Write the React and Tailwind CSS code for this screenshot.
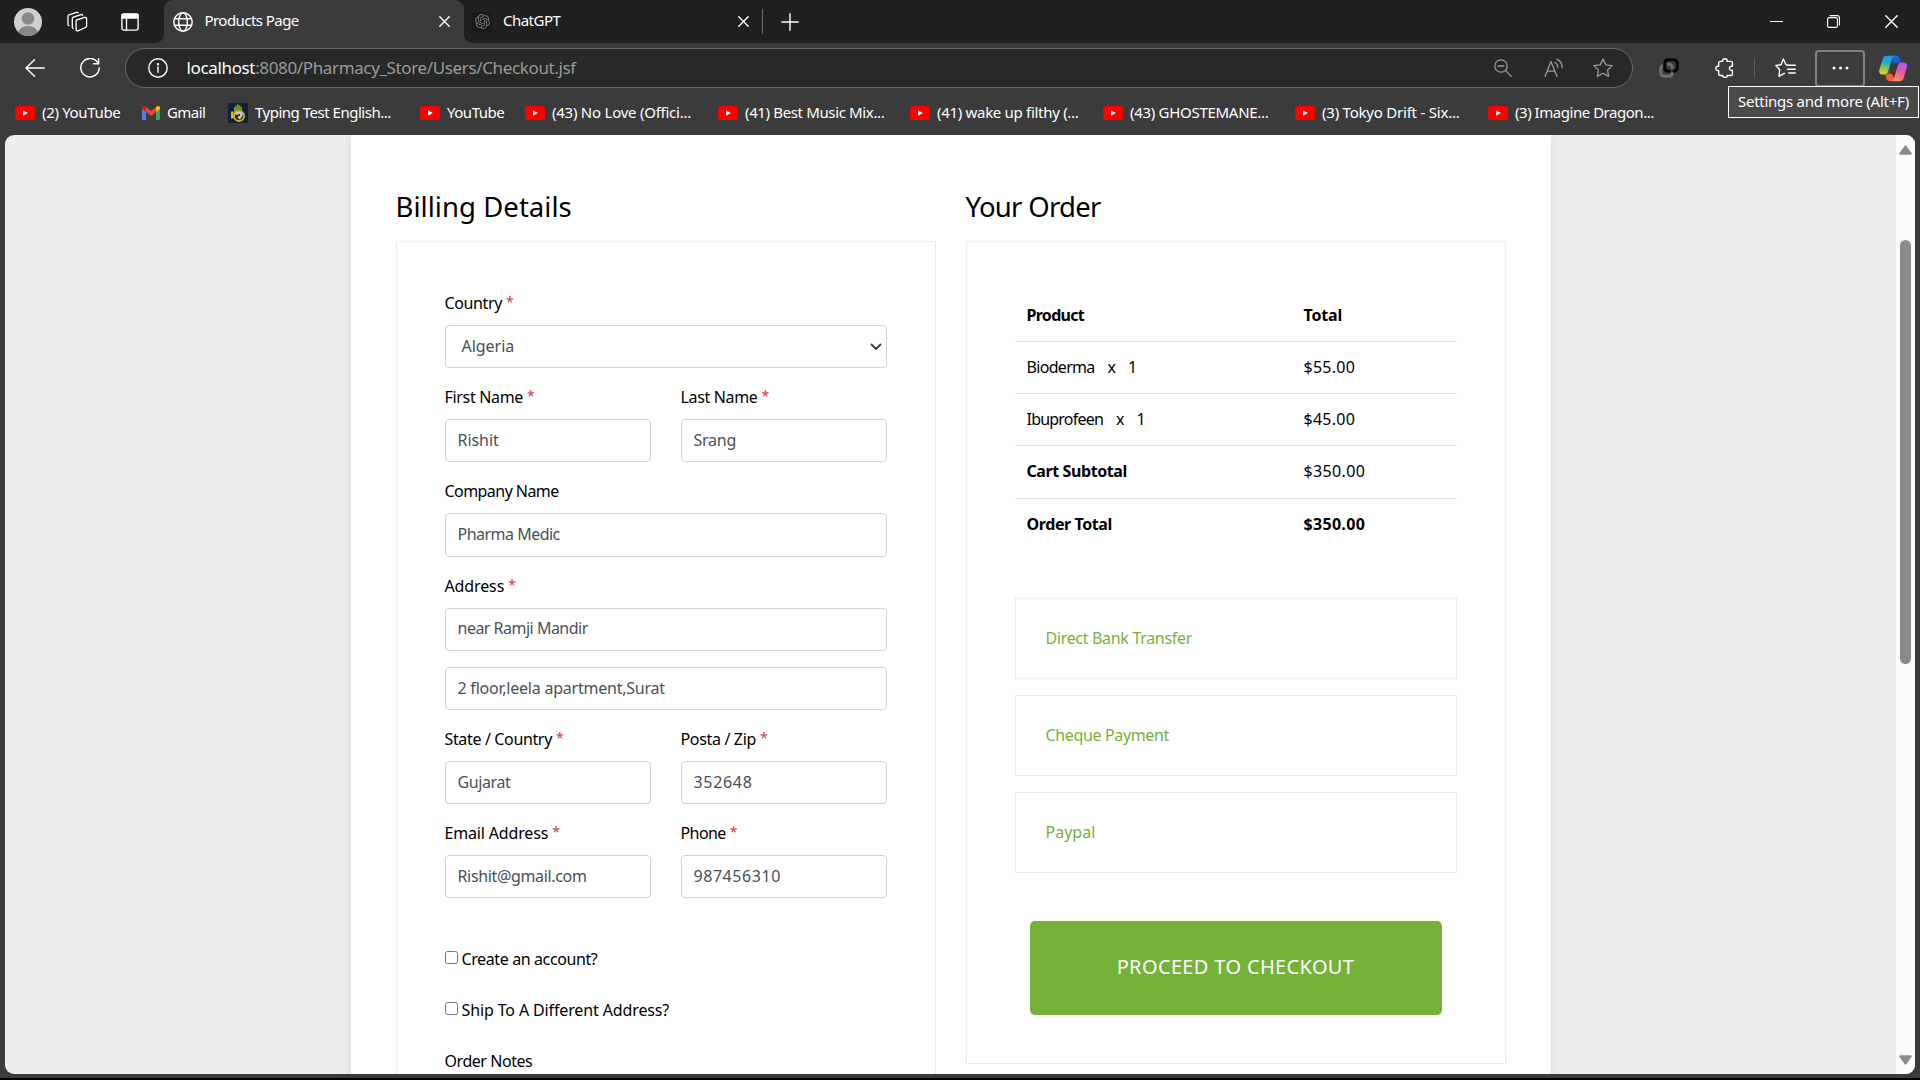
import React, { useLayoutEffect, useRef, useState } from "react";

/* Text whose tracking is adjusted so the line spans a given ink width. */
function Fit({ w, className = "", children }) {
  const ref = useRef(null);
  const [spacing, setSpacing] = useState(0);
  useLayoutEffect(() => {
    const natural = ref.current.getBoundingClientRect().width;
    const count = String(children).length;
    if (count > 1) setSpacing((w + 0.8 - natural) / (count - 1));
  }, []);
  return (
    <span ref={ref} className={"inline-block whitespace-pre " + className} style={{ letterSpacing: spacing + "px" }}>
      {children}
    </span>
  );
}

const Svg = ({ w, h, className = "", children, sw = 1.3, stroke = "currentColor" }) => (
  <svg width={w} height={h} viewBox={`0 0 ${w} ${h}`} fill="none" stroke={stroke} strokeWidth={sw} strokeLinecap="round" strokeLinejoin="round" className={"shrink-0 " + className}>
    {children}
  </svg>
);

const Cross = ({ size = 11, className }) => (
  <Svg w={size} h={size} className={className} sw={1.4}>
    <path d={`M.8 .8 ${size - 0.8} ${size - 0.8}M${size - 0.8} .8 .8 ${size - 0.8}`} />
  </Svg>
);

const Avatar = () => (
  <svg width="28" height="28" viewBox="0 0 28 28" className="shrink-0">
    <clipPath id="avatar"><circle cx="14" cy="14" r="14" /></clipPath>
    <g clipPath="url(#avatar)">
      <rect width="28" height="28" fill="#d2d0ce" />
      <circle cx="14" cy="10.5" r="6.2" fill="#8a8886" />
      <ellipse cx="14" cy="25.5" rx="10" ry="7.5" fill="#8a8886" />
    </g>
  </svg>
);

const Workspaces = ({ className }) => (
  <Svg w={22} h={22} className={className} sw={1.3}>
    <path d="M10.3 9.1 18.6 6.4c1.2-.4 2 .3 2 1.3v7.2c0 .7-.4 1.3-1.1 1.6l-7.6 3.3c-1 .4-1.8-.1-1.8-1.1v-8.4c0-.6.1-1 .2-1.2Z" />
    <path d="M16.7 4.2c-.3-.6-.9-.8-1.6-.6L7.3 6.2c-.7.3-1 .8-1 1.5v8.600c0 .6.4 1 .9 1.2" />
    <path d="M12.200 1.900c-.3-.6-.9-.7-1.600-.5L3 3.900c-.7.3-1 .8-1 1.500v8c0 .7.3 1.100.9 1.200" />
  </Svg>
);

const VerticalTabs = ({ className }) => (
  <Svg w={18} h={18} className={className} sw={1.4}>
    <rect x=".9" y=".9" width="16.2" height="16.2" rx="2" />
    <path d="M1 1.500h16v3.500H1z" fill="currentColor" />
    <path d="M5.500 5v12" />
  </Svg>
);

const Globe = () => (
  <Svg w={20} h={20} sw={1.4}>
    <circle cx="10" cy="10" r="9.2" />
    <ellipse cx="10" cy="10" rx="4.3" ry="9.2" />
    <path d="M1.500 6.800h17M1.500 13.200h17" />
  </Svg>
);

const ChatLogo = () => (
  <span className="flex size-5 shrink-0 items-center justify-center rounded-[3px] bg-[#181818]">
    <svg width="15" height="15" viewBox="0 0 24 24" fill="#777">
      <path d="M22.282 9.821a5.985 5.985 0 0 0-.516-4.910 6.046 6.046 0 0 0-6.510-2.900A6.065 6.065 0 0 0 4.981 4.180a5.985 5.985 0 0 0-3.998 2.900 6.046 6.046 0 0 0 .743 7.097 5.980 5.980 0 0 0 .510 4.911 6.051 6.051 0 0 0 6.515 2.900A5.985 5.985 0 0 0 13.260 24a6.056 6.056 0 0 0 5.772-4.206 5.990 5.990 0 0 0 3.998-2.900 6.056 6.056 0 0 0-.748-7.073zM13.260 22.430a4.476 4.476 0 0 1-2.876-1.040l.141-.081 4.779-2.758a.795.795 0 0 0 .392-.681v-6.737l2.020 1.168a.071.071 0 0 1 .038.052v5.583a4.504 4.504 0 0 1-4.494 4.494zM3.600 18.304a4.470 4.470 0 0 1-.535-3.014l.142.085 4.783 2.759a.771.771 0 0 0 .780 0l5.843-3.369v2.332a.080.080 0 0 1-.033.062L9.740 19.950a4.500 4.500 0 0 1-6.140-1.646zM2.340 7.896a4.485 4.485 0 0 1 2.366-1.973V11.600a.766.766 0 0 0 .388.676l5.815 3.355-2.020 1.168a.076.076 0 0 1-.071 0l-4.830-2.786A4.504 4.504 0 0 1 2.340 7.872zm16.597 3.855l-5.833-3.387L15.119 7.200a.076.076 0 0 1 .071 0l4.830 2.791a4.494 4.494 0 0 1-.676 8.105v-5.678a.790.790 0 0 0-.407-.667zm2.010-3.023l-.141-.085-4.774-2.782a.776.776 0 0 0-.785 0L9.409 9.230V6.897a.066.066 0 0 1 .028-.061l4.830-2.787a4.500 4.500 0 0 1 6.680 4.660zm-12.640 4.135l-2.020-1.164a.080.080 0 0 1-.038-.057V6.075a4.500 4.500 0 0 1 7.375-3.453l-.142.080L8.704 5.460a.795.795 0 0 0-.393.681zm1.097-2.365l2.602-1.500 2.607 1.500v2.999l-2.597 1.500-2.607-1.500z" />
    </svg>
  </span>
);

const YouTube = () => (
  <svg width="20" height="14" viewBox="0 0 20 14" className="shrink-0">
    <rect width="20" height="14" rx="3.5" fill="#f00" />
    <path d="M8 4.200v5.600L12.800 7z" fill="#fff" />
  </svg>
);

const Gmail = () => (
  <svg width="18" height="14" viewBox="0 0 18 14" className="shrink-0">
    <path d="M0 2.500 4 5.500V14H1.300A1.300 1.300 0 0 1 0 12.700z" fill="#4285f4" />
    <path d="M18 2.500 14 5.500V14h2.700a1.300 1.300 0 0 0 1.300-1.300z" fill="#34a853" />
    <path d="M14 1v5l4-2.900V2c0-1.900-1.900-2.500-3-1.700z" fill="#fbbc04" />
    <path d="M0 2C0 .1 1.900-.5 3 .3L4 1v5L0 3.100z" fill="#c5221f" />
    <path d="M4 1l5 3.800L14 1v5L9 9.800 4 6z" fill="#ea4335" />
  </svg>
);

const Typing = () => (
  <svg width="20" height="20" viewBox="0 0 20 20" className="shrink-0">
    <rect width="20" height="20" fill="#0c2433" />
    <path d="M6 9V4.500l1.500-.5V2.500H9V1.500h1.700v1h1.800v1.500H14V10H6z" fill="#7ea53a" />
    <path d="M8.300 3v5M10.600 2.500V8M12.700 4v4" stroke="#3b5b27" strokeWidth=".6" />
    <path d="M3 8.500h2.500v7H3z" fill="#f1b51c" />
    <circle cx="11" cy="13" r="5" fill="none" stroke="#e0a51f" strokeWidth="2" />
    <path d="M6.500 11c2-3 7-3 8.500-.5l-1 3-2 3-2.500-1.500 1-2.500z" fill="#c9cdd0" />
    <circle cx="11" cy="12" r="1.2" fill="#2a4452" />
  </svg>
);

const Copilot = ({ className }) => (
  <svg width="28" height="27" viewBox="0 0 28 27" className={"shrink-0 " + className}>
    <defs>
      <linearGradient id="cpa" x1=".5" y1="0" x2=".3" y2="1">
        <stop offset="0" stopColor="#1b9df0" /><stop offset=".4" stopColor="#1fb0c4" /><stop offset=".7" stopColor="#8cc84b" /><stop offset="1" stopColor="#f7d417" />
      </linearGradient>
      <linearGradient id="cpb" x1=".7" y1="0" x2=".3" y2="1">
        <stop offset="0" stopColor="#a855f5" /><stop offset=".5" stopColor="#ee5a9b" /><stop offset="1" stopColor="#fb9055" />
      </linearGradient>
      <linearGradient id="cpc" x1="0" y1="0" x2="1" y2="1">
        <stop offset="0" stopColor="#1478dd" /><stop offset="1" stopColor="#1b49c8" />
      </linearGradient>
    </defs>
    <path d="M12 .8h5.500c1.600 0 2.500.9 3 2.400l1.400 4.500h-3c-2 0-3.200.5-4 2.300L13 4z" fill="url(#cpc)" />
    <path d="M6.200 19.500c2 0 3.200-.5 4-2.300l1.200-3 3.600 9.300c-.5 1.500-1.300 2.700-3 2.700h-1.500c-1.700 0-2.500-.9-3-2.400z" fill="#f4603c" />
    <path d="M8 .8h7.500c-1.400.4-2 1.600-2.500 3.200L9.300 16c-.6 2.200-1.400 3.500-3.500 3.500H3.300C.6 19.500-.2 17.300.4 14.800L3.700 4C4.400 1.900 5.600.8 8 .8z" fill="url(#cpa)" />
    <path d="M20.300 26.200h-7.800c1.400-.4 2-1.600 2.500-3.200L18.700 11c.6-2.200 1.400-3.500 3.500-3.500H25c2.700 0 3.500 2.200 2.900 4.700L24.600 23c-.7 2.100-1.900 3.200-4.300 3.200z" fill="url(#cpb)" />
    <path d="m13.300 8.500h3.300l-2.300 8.800-1.300 1.700h-2.700z" fill="#3b3b3b" />
  </svg>
);

function TabBar() {
  return (
    <div className="flex h-[43px] shrink-0 items-center bg-[#202020] pl-[14px]">
      <Avatar />
      <Workspaces className="ml-[24px]" />
      <VerticalTabs className="ml-[33px]" />
      <div className="relative ml-[25px] flex h-full w-[300px] items-center rounded-t-[9px] bg-[#3b3b3b] pr-[14px] pl-[9px]">
        <span className="absolute bottom-0 -left-[9px] size-[9px] bg-[radial-gradient(circle_at_0_0,#202020_8.5px,#3b3b3b_9.5px)]" />
        <span className="absolute -right-[9px] bottom-0 size-[9px] bg-[radial-gradient(circle_at_100%_0,#202020_8.5px,#3b3b3b_9.5px)]" />
        <Globe />
        <Fit w={94} className="mb-[2px] ml-[11.5px] text-[15px]">Products Page</Fit>
        <Cross className="ml-auto" />
      </div>
      <div className="flex h-full w-[298px] items-center pr-[13px] pl-[8px]">
        <ChatLogo />
        <Fit w={57} className="mb-[2px] ml-[11px] text-[15px]">ChatGPT</Fit>
        <Cross className="ml-auto" />
      </div>
      <span className="h-[25px] w-px bg-[#6b6b6b]" />
      <Svg w={18} h={18} className="ml-[17.5px]" sw={1.4}><path d="M9 .8v16.400M.8 9h16.400" /></Svg>
      <Svg w={13} h={13} className="ml-auto" sw={1}><path d="M0 6.500h13" /></Svg>
      <Svg w={13} h={13} className="ml-[44px]" sw={1.1}>
        <rect x=".6" y="2.6" width="9.8" height="9.8" rx="1.5" />
        <path d="M3 .6h7.400a2 2 0 0 1 2 2V10" />
      </Svg>
      <Cross size={13} className="mr-[22px] ml-[45px]" />
    </div>
  );
}

function Toolbar() {
  return (
    <div className="flex h-[50px] shrink-0 items-center pl-[25px]">
      <Svg w={20} h={18} className="mb-[1px]" sw={1.5}><path d="M19.200 9H1M9.500 .8 1 9l8.500 8.200" /></Svg>
      <Svg w={20} h={20} className="ml-[35px]" sw={1.5}>
        <path d="M18.200 5.500A9.200 9.200 0 1 0 19.200 10" />
        <path d="M18.600 .8v5h-5" />
      </Svg>
      <div className="ml-[25px] flex h-[40px] w-[1508px] items-center rounded-full border border-[#6b6b6b] bg-[#282828] pl-[21.5px]">
        <Svg w={20} h={20} sw={1.4}>
          <circle cx="10" cy="10" r="9.2" />
          <path d="M10 9v5.200" /><circle cx="10" cy="6.2" r=".5" fill="currentColor" />
        </Svg>
        <div className="mb-[1px] ml-[19px] flex text-[17px]">
          <Fit w={68.2}>localhost</Fit>
          <Fit w={320.2} className="text-[#9a9a9a]">:8080/Pharmacy_Store/Users/Checkout.jsf</Fit>
        </div>
        <div className="mr-[19.5px] ml-auto flex items-center text-[#9a9a9a]">
          <Svg w={18} h={18} sw={1.3}><circle cx="7" cy="7" r="6.2" /><path d="m11.600 11.600 5.600 5.600M4.200 7h5.600" /></Svg>
          <Svg w={20} h={20} className="ml-[32px]" sw={1.3}>
            <path d="M1 18.500 7 3.500l6 15M3.200 13.200h7.700" />
            <path d="M11 4.500c1.800 1 2.800 2.800 2.800 5M12.800 1.200c3.200 1.500 5.400 4.500 5.400 8.500" />
          </Svg>
          <Svg w={20} h={20} className="ml-[29px]" sw={1.3}>
            <path d="m10 1 2.800 5.900 6.300.8-4.600 4.400 1.200 6.300L10 15.300l-5.700 3.100 1.200-6.300L.9 7.700l6.300-.8z" />
          </Svg>
        </div>
      </div>
      <Svg w={20} h={20} className="ml-[26px]" sw={3}>
        <path d="M5 7.200C3 7.500 1.700 8.800 1.700 11v3.300c0 2.500 1.500 4 4 4h3.600c2.300 0 3.800-1.200 4-3.300" stroke="#6e6e70" />
        <path d="M9.500 6.300c2.300.1 3.500 1.200 3.700 3.400" stroke="#6e6e70" sw={2} />
        <path d="M10.500 13.300H9.700c-2.500 0-4-1.500-4-4V5.700c0-2.500 1.500-4 4-4h4.600c2.500 0 4 1.500 4 4v3.600c0 2.300-1.200 3.700-3.300 4" stroke="#050505" />
      </Svg>
      <Svg w={20} h={20} className="ml-[36px]" sw={1.4}>
        <path d="M5.300 3.400h2.300C7.300 1.800 8.300.8 9.900.8s2.600 1 2.300 2.600h3.600c1 0 1.600.6 1.600 1.600v3.400c-1.800-.3-3 .3-3 1.900s1.200 2.300 3 2v3.600c0 1-.6 1.600-1.600 1.600h-3.500c.1 1.100-.8 1.900-2.300 1.900s-2.400-.8-2.300-1.900H5.300c-1 0-1.600-.6-1.600-1.600v-3.400c-1.900.3-2.900-.7-2.900-2.200s1-2.400 2.900-2.100V5c0-1 .6-1.600 1.600-1.600Z" />
      </Svg>
      <span className="ml-[19px] h-[20px] w-px bg-[#5c5c5c]" />
      <Svg w={21} h={20} className="ml-[20px]" sw={1.4}>
        <path d="M13.500 7.200 11 6.700 8.300 1 6 6.700.9 7.500 4.700 11.800 3.900 18.300 9.300 15.300" />
        <path d="M14 7.300h6.300M12.500 11.200h7.800M13.800 15h6.500" />
      </Svg>
      <div className="ml-[19px] flex h-[37px] w-[50px] items-center justify-center rounded-[4px] border-2 border-[#7b828b]">
        <Svg w={17} h={4} stroke="none"><circle cx="2" cy="2" r="1.5" fill="#fff" /><circle cx="8.5" cy="2" r="1.5" fill="#fff" /><circle cx="15" cy="2" r="1.5" fill="#fff" /></Svg>
      </div>
      <Copilot className="ml-[14px]" />
    </div>
  );
}

const BOOKMARKS = [
  { icon: YouTube, label: "(2) YouTube", w: 78, slot: "w-[127px]" },
  { icon: Gmail, label: "Gmail", w: 38, slot: "w-[86px]" },
  { icon: Typing, label: "Typing Test English...", w: 135.5, slot: "w-[192px]" },
  { icon: YouTube, label: "YouTube", w: 57, slot: "w-[105px]" },
  { icon: YouTube, label: "(43) No Love (Offici...", w: 138.5, slot: "w-[193px]" },
  { icon: YouTube, label: "(41) Best Music Mix...", w: 139, slot: "w-[192px]" },
  { icon: YouTube, label: "(41) wake up filthy (...", w: 141, slot: "w-[193px]" },
  { icon: YouTube, label: "(43) GHOSTEMANE...", w: 138, slot: "w-[192px]" },
  { icon: YouTube, label: "(3) Tokyo Drift - Six...", w: 137, slot: "w-[193px]" },
  { icon: YouTube, label: "(3) Imagine Dragon...", w: 138.5, slot: "w-[193px]" },
];

function Bookmarks() {
  return (
    <div className="flex h-[42px] shrink-0 items-center pb-[2px] pl-[15px]">
      {BOOKMARKS.map(({ icon: Icon, label, w, slot }) => (
        <div key={label} className={"flex shrink-0 items-center gap-[7px] " + slot}>
          <Icon />
          <Fit w={w} className="mb-[2px] text-[15px]">{label}</Fit>
        </div>
      ))}
    </div>
  );
}

const Label = ({ w, required, children }) => (
  <div className="mb-[11px] flex h-6 gap-[4px] leading-[26px] text-black">
    <Fit w={w}>{children}</Fit>
    {required && <span className="text-[14px] leading-[24px] text-[#dc3545]">*</span>}
  </div>
);

const Box = ({ w, children }) => (
  <div className="flex h-[43.2px] items-center rounded-[4px] border border-[#ced4da] pb-[1.5px] pl-[12px] text-[#495057]">
    <Fit w={w}>{children}</Fit>
  </div>
);

const Field = ({ label, lw, required, value, vw }) => (
  <div>
    <Label w={lw} required={required}>{label}</Label>
    <Box w={vw}>{value}</Box>
  </div>
);

const Check = ({ w, children }) => (
  <label className="flex h-[51px] items-start gap-[4px] leading-[26px]">
    <input type="checkbox" className="mt-[5px] size-[13px]" />
    <Fit w={w}>{children}</Fit>
  </label>
);

function Billing() {
  return (
    <section className="w-[540px]">
      <h2 className="h-[53px] text-[27.5px] leading-[37px]"><Fit w={175.5}>Billing Details</Fit></h2>
      <div className="flex h-[1100px] flex-col gap-4 border border-[#ebebeb] p-12">
        <div>
          <Label w={57} required>Country</Label>
          <div className="flex h-[43.2px] items-center justify-between rounded-[4px] border border-[#ced4da] pr-[4px] pb-[2px] pl-[16px] text-[#495057]">
            <Fit w={52}>Algeria</Fit>
            <Svg w={12} h={8} sw={2} stroke="#3d454d" className="mt-[2px]"><path d="m1.500 1.500 4.500 4.500 4.500-4.500" /></Svg>
          </div>
        </div>
        <div className="grid grid-cols-2 gap-[30px]">
          <Field label="First Name" lw={78} required value="Rishit" vw={40.5} />
          <Field label="Last Name" lw={76.5} required value="Srang" vw={42} />
        </div>
        <Field label="Company Name" lw={114} value="Pharma Medic" vw={102} />
        <Field label="Address" lw={59} required value="near Ramji Mandir" vw={130} />
        <Box w={206.8}>2 floor,leela apartment,Surat</Box>
        <div className="grid grid-cols-2 gap-[30px]">
          <Field label="State / Country" lw={107} required value="Gujarat" vw={52.5} />
          <Field label="Posta / Zip" lw={75} required value="352648" vw={57.5} />
        </div>
        <div className="grid grid-cols-2 gap-[30px]">
          <Field label="Email Address" lw={103} required value="Rishit@gmail.com" vw={128.6} />
          <Field label="Phone" lw={45} required value="987456310" vw={86} />
        </div>
        <div className="mt-[31.5px]">
          <Check w={135.5}>Create an account?</Check>
          <Check w={207}>Ship To A Different Address?</Check>
          <Fit w={87.5} className="leading-[26px]">Order Notes</Fit>
        </div>
      </div>
    </section>
  );
}

const Row = ({ className, left, right }) => (
  <div className={"flex pt-[12px] leading-[26px] " + className}>
    <div className="flex w-[289px] shrink-0 gap-[13px] pl-[12px]">{left}</div>
    {right}
  </div>
);

const Payment = ({ w, children }) => (
  <div className="h-[81px] border border-[#ebebeb] px-[30px] py-[26px] leading-[26px] text-[#75b239]">
    <Fit w={w}>{children}</Fit>
  </div>
);

function Order() {
  return (
    <section className="w-[540px]">
      <h2 className="h-[53px] text-[27.5px] leading-[37px]"><Fit w={135}>Your Order</Fit></h2>
      <div className="h-[823px] border border-[#ebebeb] p-12">
        <div className="h-[308px]">
          <Row className="h-[51px] font-bold" left={<Fit w={57.5}>Product</Fit>} right={<Fit w={38}>Total</Fit>} />
          <Row className="h-[52px] border-t border-[#dee2e6]" left={<><Fit w={68}>Bioderma</Fit><span>x</span><span className="-ml-px">1</span></>} right={<Fit w={50.5}>$55.00</Fit>} />
          <Row className="h-[52px] border-t border-[#dee2e6]" left={<><Fit w={76.5}>Ibuprofeen</Fit><span>x</span><span className="-ml-px">1</span></>} right={<Fit w={50.5}>$45.00</Fit>} />
          <Row className="h-[53px] border-t border-[#dee2e6]" left={<Fit w={100} className="font-bold">Cart Subtotal</Fit>} right={<Fit w={60.5}>$350.00</Fit>} />
          <Row className="h-[52px] border-t border-[#dee2e6] font-bold" left={<Fit w={85}>Order Total</Fit>} right={<Fit w={60.5}>$350.00</Fit>} />
        </div>
        <div className="flex flex-col gap-4">
          <Payment w={146}>Direct Bank Transfer</Payment>
          <Payment w={123}>Cheque Payment</Payment>
          <Payment w={49}>Paypal</Payment>
        </div>
        <button className="mx-auto mt-12 flex h-[94px] w-[412px] items-center justify-center rounded-[5px] bg-[#75b239] pb-[2px] text-[20px] text-white">
          <Fit w={236.5}>PROCEED TO CHECKOUT</Fit>
        </button>
      </div>
    </section>
  );
}

function Scrollbar() {
  return (
    <div className="flex w-[19px] shrink-0 flex-col items-center bg-[#fcfcfc]">
      <svg width="13" height="10" viewBox="0 0 13 10" className="mt-[10px] shrink-0"><path d="M6.500 1.300 11.800 8.800H1.200z" fill="#8b8b8b" stroke="#8b8b8b" strokeWidth="2" strokeLinejoin="round" /></svg>
      <div className="mt-[85px] h-[424px] w-[11px] shrink-0 rounded-full bg-[#8b8b8b]" />
      <svg width="13" height="10" viewBox="0 0 13 10" className="mt-auto mb-[9px] shrink-0"><path d="M6.500 8.700 11.800 1.200H1.200z" fill="#8b8b8b" stroke="#8b8b8b" strokeWidth="2" strokeLinejoin="round" /></svg>
    </div>
  );
}

export default function App() {
  return (
    <div className="relative flex h-[1080px] w-[1920px] flex-col overflow-hidden border-b-2 border-black bg-[#3b3b3b] font-['Noto_Sans',sans-serif] text-white">
      <TabBar />
      <Toolbar />
      <Bookmarks />
      <main className="mx-[5px] flex h-[939px] overflow-hidden rounded-[9px] bg-[#eeeeee] text-base text-black">
        <div className="flex flex-1 justify-center overflow-hidden">
          <div className="flex h-[1200px] w-[1200px] shrink-0 gap-[30px] bg-white px-[45px] pt-[53px] shadow-[0_0_12px_rgba(0,0,0,0.08)]">
            <Billing />
            <Order />
          </div>
        </div>
        <Scrollbar />
      </main>
      <div className="absolute top-[86px] right-px flex h-[32px] w-[191px] items-center border border-white bg-[#4a4a4a] pb-[2px] pl-[9px] text-[15px]">
        <Fit w={170.5}>Settings and more (Alt+F)</Fit>
      </div>
    </div>
  );
}
